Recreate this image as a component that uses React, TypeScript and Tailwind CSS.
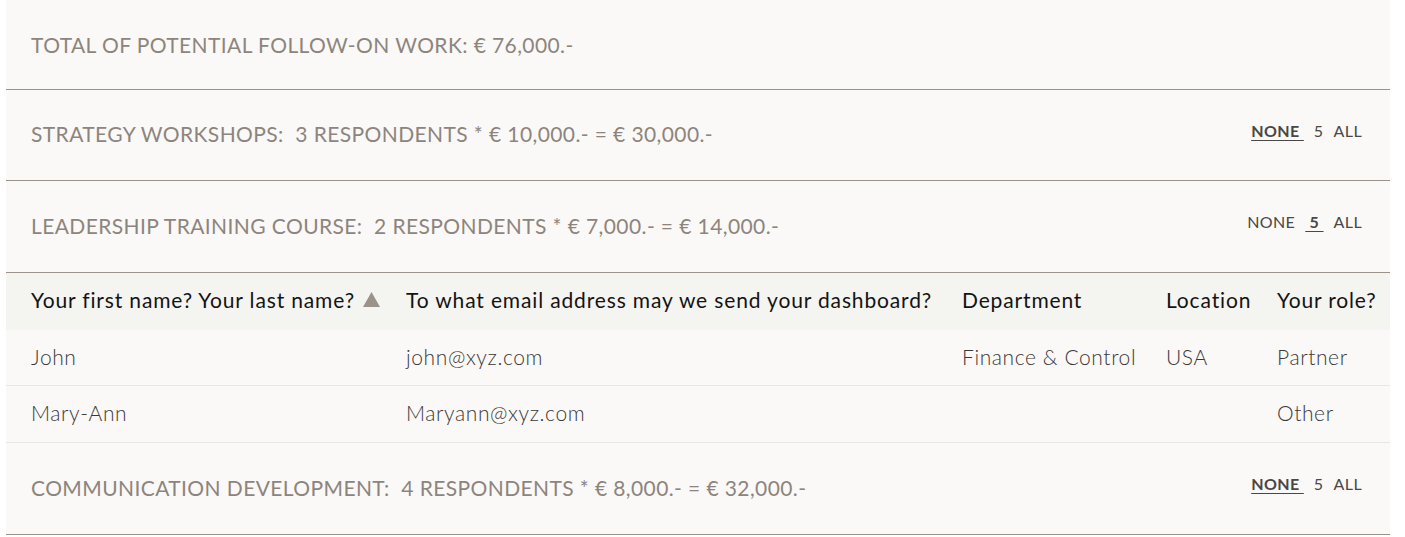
import { useState } from 'react';

const sections = [
  { id: 1, title: 'STRATEGY WORKSHOPS:', detail: '3 RESPONDENTS * € 10,000.- = € 30,000.-', height: 'h-[91px]' },
  { id: 2, title: 'LEADERSHIP TRAINING COURSE:', detail: '2 RESPONDENTS * € 7,000.- = € 14,000.-', height: 'h-[92px]' },
  { id: 3, title: 'COMMUNICATION DEVELOPMENT:', detail: '4 RESPONDENTS * € 8,000.- = € 32,000.-', height: 'h-[92px]' },
];

const rows = [
  { name: 'John', email: 'john@xyz.com', department: 'Finance & Control', location: 'USA', role: 'Partner', height: 'h-[56px]' },
  { name: 'Mary-Ann', email: 'Maryann@xyz.com', department: '', location: '', role: 'Other', height: 'h-[57px]' },
];

function Toggle({ mode, onChange }: { mode: string; onChange: (m: string) => void }) {
  const opts = [
    { key: 'none', label: 'NONE' },
    { key: '5', label: '5' },
    { key: 'all', label: 'ALL' },
  ];
  return (
    <div className="flex items-center gap-[10px] text-[16px] tracking-[0.4px] text-[#4a4744] mb-[7px]">
      {opts.map((o) => (
        <button
          key={o.key}
          onClick={() => onChange(o.key)}
          className={mode === o.key ? 'font-bold underline underline-offset-[3px] whitespace-pre' : 'whitespace-pre'}
        >
          {mode === o.key ? (o.key === '5' ? ` ${o.label} ` : `${o.label} `) : o.label}
        </button>
      ))}
    </div>
  );
}

function SectionHeader({ title, detail, height, mode, onChange }: { title: string; detail: string; height: string; mode: string; onChange: (m: string) => void }) {
  return (
    <div className={`flex items-center justify-between ${height} pl-[25px] pr-[28px] pb-[2px] border-b border-[#9b928a]`}>
      <div className="text-[21px] tracking-[0.4px] text-[#8d857d] whitespace-pre">
        {title}  {detail}
      </div>
      <Toggle mode={mode} onChange={onChange} />
    </div>
  );
}

export default function App() {
  const [modes, setModes] = useState<Record<number, string>>({ 1: 'none', 2: '5', 3: 'none' });
  const setMode = (id: number) => (m: string) => setModes({ ...modes, [id]: m });

  const th = 'text-left font-normal pl-[25px] pb-[3px] leading-[28px] whitespace-nowrap';
  const td = 'pl-[25px] pb-[2px] leading-[28px] border-b border-[#e9e7e4] whitespace-nowrap';

  return (
    <div className="min-h-screen bg-white pl-[6px] pr-[15px]" style={{ fontFamily: 'Lato, "Open Sans", sans-serif' }}>
      <div className="bg-[#faf9f7]">
        <div className="flex items-center h-[90px] pl-[25px] border-b border-[#9b928a]">
          <div className="text-[21px] tracking-[0.4px] text-[#8d857d]">TOTAL OF POTENTIAL FOLLOW-ON WORK: € 76,000.-</div>
        </div>

        <SectionHeader {...sections[0]} mode={modes[1]} onChange={setMode(1)} />
        <SectionHeader {...sections[1]} mode={modes[2]} onChange={setMode(2)} />

        <table className="w-full table-fixed border-separate border-spacing-0 text-[21px]">
          <colgroup>
            <col className="w-[375px]" />
            <col className="w-[556px]" />
            <col className="w-[204px]" />
            <col className="w-[111px]" />
            <col />
          </colgroup>
          <thead>
            <tr className="bg-[#f4f4f1] h-[57px] text-[#141312] tracking-[0.85px]">
              <th className={th}>
                <span className="inline-flex items-center gap-[8px]">
                  Your first name? Your last name?
                  <svg width="17" height="15" viewBox="0 0 17 15" className="mb-[2px]">
                    <path d="M8.5 0 L17 15 L0 15 Z" fill="#9b928a" />
                  </svg>
                </span>
              </th>
              <th className={th}>To what email address may we send your dashboard?</th>
              <th className={th}>Department</th>
              <th className={th}>Location</th>
              <th className={th}>Your role?</th>
            </tr>
          </thead>
          <tbody>
            {rows.map((r) => (
              <tr key={r.name} className={`${r.height} text-[#3a3836] font-light tracking-[0.6px]`}>
                <td className={td}>{r.name}</td>
                <td className={td}>{r.email}</td>
                <td className={td}>{r.department}</td>
                <td className={td}>{r.location}</td>
                <td className={td}>{r.role}</td>
              </tr>
            ))}
          </tbody>
        </table>

        <SectionHeader {...sections[2]} mode={modes[3]} onChange={setMode(3)} />
      </div>
    </div>
  );
}
